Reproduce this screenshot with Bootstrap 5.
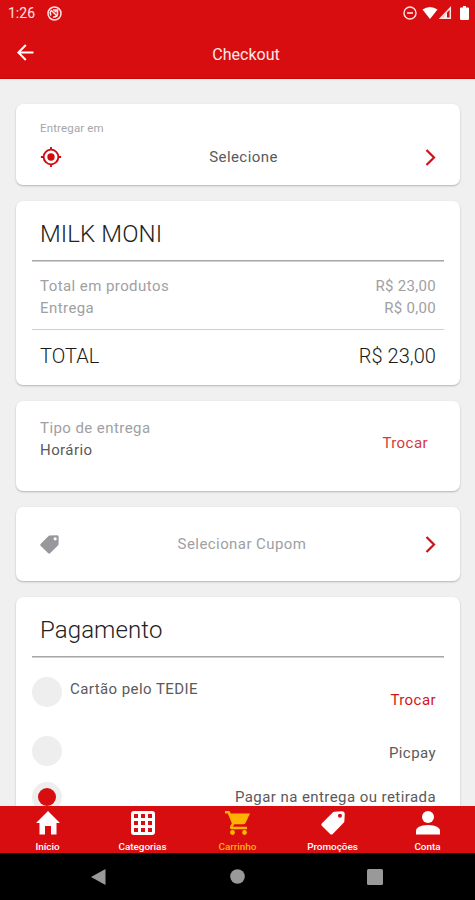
<!DOCTYPE html>
<html lang="pt-BR">
<head>
<meta charset="utf-8">
<meta name="viewport" content="width=device-width, initial-scale=1">
<title>Checkout</title>
<link href="https://cdn.jsdelivr.net/npm/bootstrap@5.3.0/dist/css/bootstrap.min.css" rel="stylesheet">
<style>
  :root { --brand: #d80d10; }
  body { font-family: Roboto, "Liberation Sans", sans-serif; font-size: 15px; line-height: 22px; letter-spacing: .43px; color: #5a5a5a; background: #f0f0f0; }
  svg { display: block; flex: none; }
  .screen { height: 900px; }
  .brand-bg { background: var(--brand); }
  .brand-text { color: #d8383c; }
  .status { height: 26px; font-size: 14px; letter-spacing: 0; padding: 0 6px 0 8px; color: #ffe4e4; }
  .appbar { height: 53px; display: grid; grid-template-columns: 1fr auto 1fr; padding: 1px 0 0 17px; font-size: 16px; letter-spacing: 0; color: #ffeaea; border-bottom: 1px solid #c9090c; }
  .content-area { padding: 25px 15px 0 16px; gap: 16px; }
  .panel { --bs-card-border-width: 0; --bs-card-border-radius: 7px; --bs-card-color: inherit; flex: none; box-shadow: 0 1px 2px rgba(0,0,0,.26); padding: 0 16px; }
  .h-address { height: 81px; } .h-total { height: 184px; } .h-type { height: 90px; } .h-coupon { height: 74px; } .h-pay { height: 260px; }
  .inset { padding: 0 8px; }
  .muted { color: #a0a0a3; }
  .money { letter-spacing: .3px; }
  .tiny { font-size: 11.500px; letter-spacing: .15px; line-height: 14px; color: #a6a6a6; padding-top: 17px; }
  .address-row { padding-top: 11px; }
  .title { font-size: 24px; line-height: 30px; color: #222; font-weight: 300; height: 60px; padding-top: 18px; border-bottom: 1px solid #a6a6a6; box-shadow: 0 1px #cfcfcf; letter-spacing: .1px; }
  .sums { height: 69px; padding-top: 14px; border-bottom: 1px solid #cfcfcf; }
  .grand { font-size: 20px; color: #1a1a1a; height: 52px; font-weight: 300; letter-spacing: .05px; }
  .pick { width: 30px; height: 30px; border-radius: 50%; background: #eee; flex: none; }
  .pick i { width: 18px; height: 18px; border-radius: 50%; background: var(--brand); }
  .pay-row { padding-top: 20px; height: 79px; }
  .pay-name { padding: 1px 0 0 8px; }
  .pay-change { padding-top: 12px; color: #d4161c; }
  .pay-second { height: 30px; }
  .pay-third { height: 30px; margin-top: 16px; }
  .tabs { height: 47px; flex: none; color: #fff; font-size: 9.900px; letter-spacing: 0; line-height: 12px; font-weight: 500; padding-top: 5px; }
  .tabs > div { width: 95px; gap: 6px; }
  .on { color: #ffb300; }
  .sys { height: 47px; flex: none; background: #000; padding: 0 92px 0 91px; }
</style>
<script src="https://cdn.jsdelivr.net/npm/bootstrap@5.3.0/dist/js/bootstrap.bundle.min.js"></script>
</head>
<body>
<div class="screen d-flex flex-column overflow-hidden text-nowrap">
  <header class="brand-bg flex-shrink-0">
    <div class="status d-flex align-items-center">
      <span>1:26</span>
      <svg class="ms-2 ps-1" width="19" height="15" viewBox="0 0 15 15" fill="none" stroke="currentColor" stroke-width="1.5"><circle cx="7.5" cy="7.5" r="6.5"/><path d="M4 9.500a4 4 0 0 1 1-5.300M6 4h4.500v4.500a4 4 0 0 1-4.500 2.500M5 5l5.500 5.500M7.500 5.500h2"/></svg>
      <svg class="ms-auto" width="14" height="14" viewBox="0 0 14 14" fill="none" stroke="currentColor" stroke-width="1.4"><circle cx="7" cy="7" r="6"/><path d="M4 7h6" stroke-width="1.6"/></svg>
      <svg class="ms-1" width="18" height="14" viewBox="0 0 18 14" fill="#fff"><path d="M1.500 3.600Q9-1.600 16.500 3.600L9 13z"/></svg>
      <svg width="13" height="14" viewBox="0 0 13 14"><path d="M11.300 2v10.300H1.500z" fill="none" stroke="currentColor" stroke-width="1.500"/><path d="M3 12l5-6v6z" fill="currentColor"/></svg>
      <svg class="ms-2" width="9" height="14" viewBox="0 0 9 14" fill="#fff"><path d="M3 0h3v1.500h2a1 1 0 0 1 1 1V13a1 1 0 0 1-1 1H1a1 1 0 0 1-1-1V2.500a1 1 0 0 1 1-1h2z"/></svg>
    </div>
    <div class="appbar align-items-center">
      <svg width="17" height="17" viewBox="0 0 17 17" fill="none" stroke="#fff" stroke-width="2"><path d="M16.500 8.500H1.500M8.800 1L1.400 8.500l7.400 7.500"/></svg>
      <span class="pt-1">Checkout</span>
    </div>
  </header>

  <main class="content-area d-flex flex-column flex-grow-1 overflow-hidden">
    <section class="card panel h-address">
      <div class="inset">
        <div class="tiny">Entregar em</div>
        <div class="address-row d-flex justify-content-between align-items-center">
          <svg width="22" height="22" viewBox="0 0 24 24" fill="#d00b10"><path d="M12 8a4 4 0 1 0 0 8 4 4 0 0 0 0-8zm8.940 3A8.990 8.990 0 0 0 13 3.060V1h-2v2.060A8.990 8.990 0 0 0 3.060 11H1v2h2.060A8.990 8.990 0 0 0 11 20.940V23h2v-2.060A8.990 8.990 0 0 0 20.940 13H23v-2zM12 19a7 7 0 1 1 0-14 7 7 0 0 1 0 14z"/></svg>
          <span>Selecione</span>
          <svg width="11" height="17" viewBox="0 0 11 17" fill="none" stroke="#c9141a" stroke-width="2.200"><path d="M1.500 1l7.500 7.500L1.500 16"/></svg>
        </div>
      </div>
    </section>

    <section class="card panel h-total">
      <div class="title inset">MILK MONI</div>
      <div class="sums inset muted">
        <div class="d-flex justify-content-between"><span>Total em produtos</span><span class="money">R$ 23,00</span></div>
        <div class="d-flex justify-content-between"><span>Entrega</span><span class="money">R$ 0,00</span></div>
      </div>
      <div class="grand inset d-flex justify-content-between align-items-center"><span>TOTAL</span><span>R$ 23,00</span></div>
    </section>

    <section class="card panel h-type">
      <div class="inset d-flex justify-content-between align-items-center pt-3">
        <div><div class="muted">Tipo de entrega</div><div>Horário</div></div>
        <span class="brand-text pe-2 pt-2">Trocar</span>
      </div>
    </section>

    <section class="card panel h-coupon justify-content-center">
      <div class="inset d-flex justify-content-between align-items-center">
        <svg width="19" height="19" viewBox="0 0 19 19" fill="#97979c"><path fill-rule="evenodd" d="M9.500.5 17 .3q1.700 0 1.700 1.700l-.2 7.200q0 .7-.6 1.200l-7.600 7.600q-1.200 1-2.300 0L.8 11.100q-1.100-1.200 0-2.300L8.300 1.200Q8.800.600 9.500.5zM15.200 2.200a1.600 1.600 0 1 0 0 3.200 1.600 1.600 0 0 0 0-3.200z"/></svg>
        <span class="muted">Selecionar Cupom</span>
        <svg width="11" height="17" viewBox="0 0 11 17" fill="none" stroke="#c9141a" stroke-width="2.200"><path d="M1.500 1l7.500 7.500L1.500 16"/></svg>
      </div>
    </section>

    <section class="card panel h-pay">
      <div class="title inset">Pagamento</div>
      <div class="d-flex pay-row pe-2">
        <span class="pick"></span><span class="pay-name">Cartão pelo TEDIE</span><span class="ms-auto pay-change">Trocar</span>
      </div>
      <div class="d-flex justify-content-between align-items-center pe-2 pay-second"><span class="pick"></span><span class="pt-1">Picpay</span></div>
      <div class="d-flex justify-content-between align-items-center pe-2 pay-third"><span class="pick d-flex align-items-center justify-content-center"><i></i></span><span>Pagar na entrega ou retirada</span></div>
    </section>
  </main>

  <nav class="tabs brand-bg d-flex">
    <div class="d-flex flex-column align-items-center"><svg width="24" height="24" viewBox="0 0 24 24" fill="#fff"><path d="M12 0 24 12h-3.500v11.500H15V15H9v8.500H3.500V12H0z"/></svg>Início</div>
    <div class="d-flex flex-column align-items-center"><svg width="24" height="24" viewBox="0 0 24 24" fill="#fff"><path fill-rule="evenodd" d="M3 0h18a3 3 0 0 1 3 3v18a3 3 0 0 1-3 3H3a3 3 0 0 1-3-3V3a3 3 0 0 1 3-3zM3 3v4h4V3zm7 0v4h4V3zm7 0v4h4V3zM3 10v4h4v-4zm7 0v4h4v-4zm7 0v4h4v-4zM3 17v4h4v-4zm7 0v4h4v-4zm7 0v4h4v-4z"/></svg>Categorias</div>
    <div class="d-flex flex-column align-items-center on"><svg width="26" height="24" viewBox="0 0 26 24" fill="currentColor"><path d="M0 0h4.500l1.300 2.500H25L20.500 12q-.7 1.300-2 1.300H9.200l-1.300 2.400H22v2.500H6.500q-2.300-.4-1.300-2.900l1.700-3L2.800 2.500H0z"/><circle cx="7.500" cy="21.500" r="2.400"/><circle cx="19.500" cy="21.500" r="2.400"/></svg>Carrinho</div>
    <div class="d-flex flex-column align-items-center"><svg width="24" height="24" viewBox="0 0 19 19" fill="#fff"><path fill-rule="evenodd" d="M10.500.5 16.500.2q2.300 0 2.300 2.300l-.3 5.700q0 .7-.6 1.200l-8.600 8.800q-1 1-2.100 0L.8 11.900q-1.100-1.200 0-2.300L9.300 1.200Q9.800.600 10.500.5zM15 2.200a1.600 1.600 0 1 0 0 3.200 1.600 1.600 0 0 0 0-3.200z"/></svg>Promoções</div>
    <div class="d-flex flex-column align-items-center"><svg width="24" height="24" viewBox="0 0 24 24" fill="#fff"><circle cx="12" cy="6" r="6"/><path d="M0 23.500v-3Q0 14 12 14t12 6.500v3z"/></svg>Conta</div>
  </nav>
  <footer class="sys d-flex justify-content-between align-items-center">
    <svg width="15" height="16" viewBox="0 0 15 16" fill="#999"><path d="M14.500 0v16L0 8z"/></svg>
    <svg width="17" height="15" viewBox="0 0 17 15" fill="#999"><circle cx="9.500" cy="7.500" r="7.300"/></svg>
    <svg width="16" height="16" viewBox="0 0 16 16" fill="#999"><rect width="16" height="16" rx="1.500"/></svg>
  </footer>
</div>
</body>
</html>
